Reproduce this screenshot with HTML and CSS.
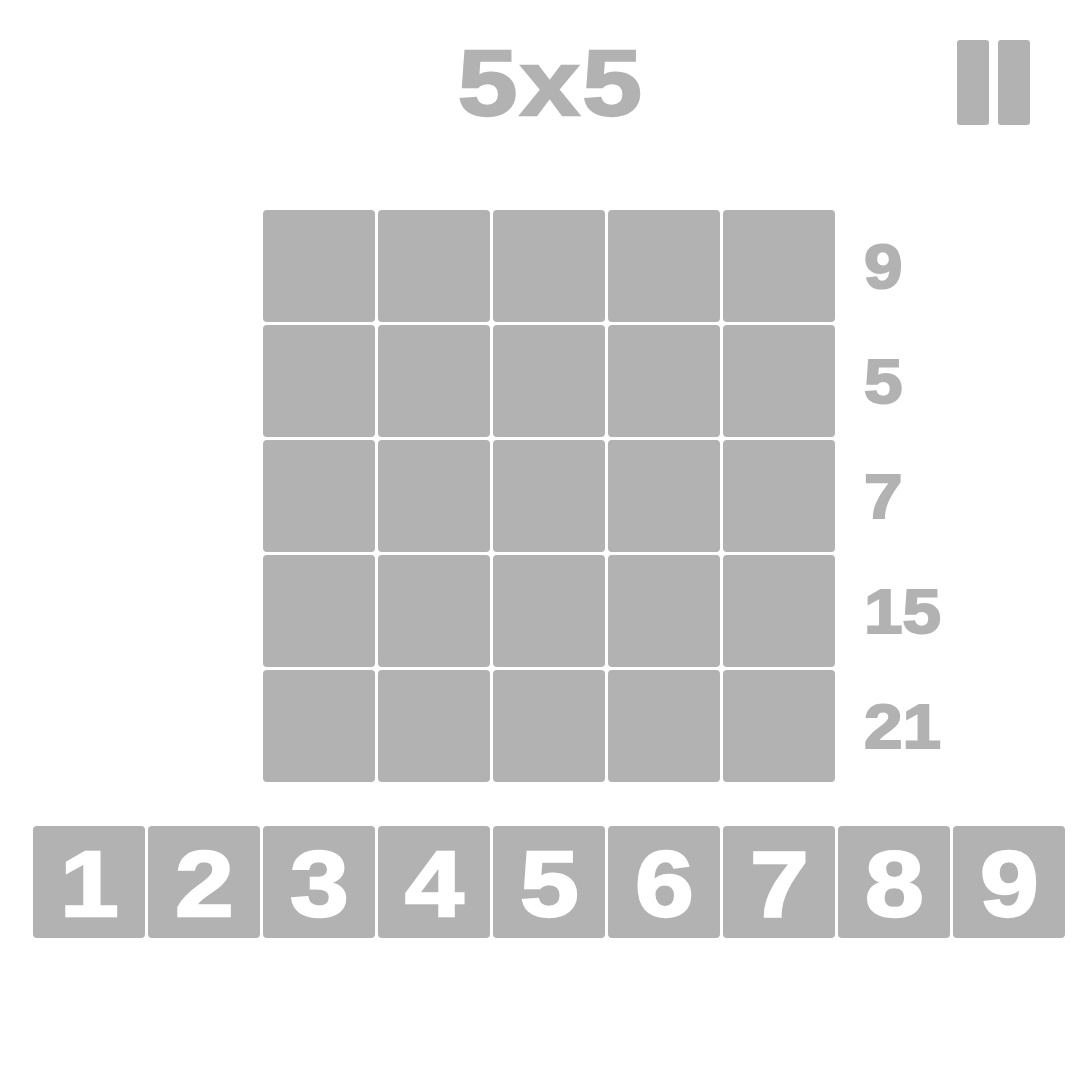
FILE: index.html
```html
<!DOCTYPE html>
<html>
<head>
    <meta charset="UTF-8">
    <title>5x5</title>
    <link rel="stylesheet" href="styles.css">
</head>
<body>
    <div class="page">
        <div class="header">
            <div></div>
            <h1 class="title"><span class="title-text">5x5</span></h1>
            <div class="pause">
                <span class="pause-bar"></span>
                <span class="pause-bar"></span>
            </div>
        </div>

        <div class="board">
            <div></div>
            <div class="grid">
                <div class="cell"></div><div class="cell"></div><div class="cell"></div><div class="cell"></div><div class="cell"></div>
                <div class="cell"></div><div class="cell"></div><div class="cell"></div><div class="cell"></div><div class="cell"></div>
                <div class="cell"></div><div class="cell"></div><div class="cell"></div><div class="cell"></div><div class="cell"></div>
                <div class="cell"></div><div class="cell"></div><div class="cell"></div><div class="cell"></div><div class="cell"></div>
                <div class="cell"></div><div class="cell"></div><div class="cell"></div><div class="cell"></div><div class="cell"></div>
            </div>
            <div class="sums">
                <div class="sum"><span class="sum-text">9</span></div>
                <div class="sum"><span class="sum-text">5</span></div>
                <div class="sum"><span class="sum-text">7</span></div>
                <div class="sum"><span class="sum-text">15</span></div>
                <div class="sum"><span class="sum-text">21</span></div>
            </div>
        </div>

        <div class="keypad">
            <button class="key"><span class="key-text">1</span></button>
            <button class="key"><span class="key-text">2</span></button>
            <button class="key"><span class="key-text">3</span></button>
            <button class="key"><span class="key-text">4</span></button>
            <button class="key"><span class="key-text">5</span></button>
            <button class="key"><span class="key-text">6</span></button>
            <button class="key"><span class="key-text">7</span></button>
            <button class="key"><span class="key-text">8</span></button>
            <button class="key"><span class="key-text">9</span></button>
        </div>
    </div>
</body>
</html>
```

FILE: styles.css
```css
body {
    margin: 0;
    background: #ffffff;
    font-family: "Liberation Sans", sans-serif;
    font-weight: 700;
}

.page {
    width: 1080px;
    height: 1080px;
    display: flex;
    flex-direction: column;
}

/* the game draws its digits wide and heavy, so scale + stroke them */
.header {
    display: grid;
    grid-template-columns: 263px 573px 1fr;
    align-items: start;
    padding-top: 40px;
    height: 170px;
    box-sizing: border-box;
}

.title {
    margin: 3px 0 0 0;
    text-align: center;
    color: #b2b2b2;
    font-size: 80px;
    line-height: 1;
    font-weight: 700;
}

.title-text {
    display: inline-block;
    letter-spacing: 2px;
    padding-left: 2px;
    -webkit-text-stroke: 2px #b2b2b2;
    transform: scale(1.34, 1.17);
}

.pause {
    display: flex;
    justify-content: flex-end;
    gap: 9px;
    padding-right: 50px;
}

.pause-bar {
    width: 32px;
    height: 85px;
    background: #b2b2b2;
    border-radius: 3px;
}

.board {
    display: grid;
    grid-template-columns: 263px 573px 1fr;
    margin-top: 40px;
}

.grid {
    display: grid;
    grid-template-columns: repeat(5, 112px);
    grid-auto-rows: 112px;
    gap: 3px;
}

.cell {
    background: #b2b2b2;
    border-radius: 4px;
}

.sums {
    display: grid;
    grid-auto-rows: 112px;
    gap: 3px;
    padding-left: 28px;
}

.sum {
    display: flex;
    align-items: center;
    color: #b2b2b2;
    font-size: 63px;
    font-weight: 700;
}

.sum-text {
    display: inline-block;
    -webkit-text-stroke: 2px #b2b2b2;
    transform: scaleX(1.1);
    transform-origin: left center;
}

.keypad {
    display: flex;
    gap: 3px;
    padding-left: 33px;
    margin-top: 44px;
}

.key {
    width: 112px;
    height: 112px;
    padding: 4px 0 0 0;
    border: none;
    border-radius: 4px;
    background: #b2b2b2;
    color: #ffffff;
    font-family: "Liberation Sans", sans-serif;
    font-size: 80px;
    font-weight: 700;
    line-height: 1;
}

.key-text {
    display: inline-block;
    -webkit-text-stroke: 2px #ffffff;
    transform: scale(1.32, 1.17);
}
```
